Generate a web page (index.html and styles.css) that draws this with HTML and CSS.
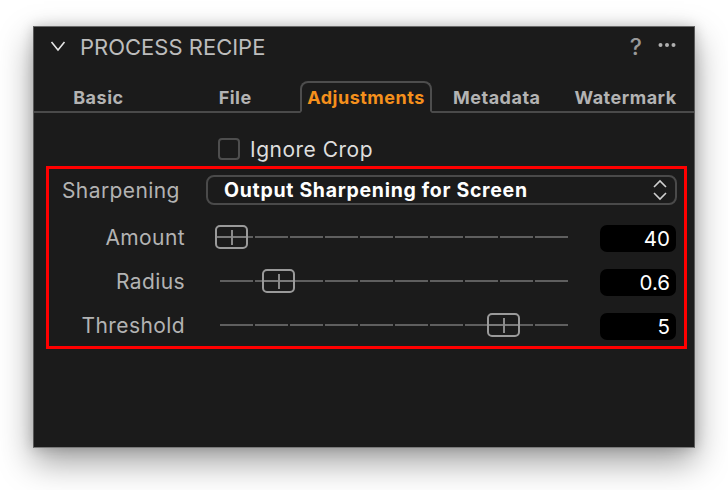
FILE: index.html
```
<!DOCTYPE html>
<html>
<head>
<meta charset="utf-8">
<link rel="stylesheet" href="styles.css">
</head>
<body>
<div class="panel">
  <div class="header">
    <svg class="chev" width="16" height="12" viewBox="0 0 16 12"><path d="M1.5 2 L8 10 L14.5 2" fill="none" stroke="#e6e6e6" stroke-width="1.6"/></svg>
    <span class="title">PROCESS RECIPE</span>
    <span class="help">?</span>
    <svg class="more" width="18" height="6" viewBox="0 0 18 6"><circle cx="2.5" cy="3" r="2" fill="#b0b0b0"/><circle cx="9" cy="3" r="2" fill="#b0b0b0"/><circle cx="15.5" cy="3" r="2" fill="#b0b0b0"/></svg>
  </div>
  <div class="tabs">
    <div class="tab">Basic</div>
    <div class="tab">File</div>
    <div class="tab active">Adjustments</div>
    <div class="tab">Metadata</div>
    <div class="tab">Watermark</div>
  </div>
  <div class="content">
    <div class="ignore"><span class="checkbox"></span><span>Ignore Crop</span></div>
    <div class="highlight">
      <div class="row select-row">
        <span class="label label-left">Sharpening</span>
        <div class="select">
          <span>Output Sharpening for Screen</span>
          <svg class="updown" width="16" height="22" viewBox="0 0 16 22"><path d="M2 8 L8 2 L14 8" fill="none" stroke="#cfcfcf" stroke-width="1.6"/><path d="M2 14 L8 20 L14 14" fill="none" stroke="#cfcfcf" stroke-width="1.6"/></svg>
        </div>
      </div>
      <div class="row slider-row">
        <span class="label">Amount</span>
        <div class="slider">
          <div class="track"><i></i><i></i><i></i><i></i><i></i><i></i><i></i><i></i><i></i><i></i></div>
          <div class="thumb" style="left:1px"></div>
        </div>
        <div class="value">40</div>
      </div>
      <div class="row slider-row">
        <span class="label">Radius</span>
        <div class="slider">
          <div class="track"><i></i><i></i><i></i><i></i><i></i><i></i><i></i><i></i><i></i><i></i></div>
          <div class="thumb" style="left:48px"></div>
        </div>
        <div class="value">0.6</div>
      </div>
      <div class="row slider-row">
        <span class="label">Threshold</span>
        <div class="slider">
          <div class="track"><i></i><i></i><i></i><i></i><i></i><i></i><i></i><i></i><i></i><i></i></div>
          <div class="thumb" style="left:273px"></div>
        </div>
        <div class="value">5</div>
      </div>
    </div>
  </div>
</div>
</body>
</html>
```
FILE: styles.css
```
* { box-sizing: border-box; }
html, body { margin: 0; padding: 0; background: #ffffff; }
body {
  padding: 26px 0 0 33px;
  min-height: 490px;
  font-family: Inter, "Liberation Sans", sans-serif;
}
.panel {
  width: 662px;
  height: 422px;
  background: #1b1b1b;
  border: 1px solid #5a5a5a;
  border-top-color: #6a6a6a;
  border-bottom-color: #7a7a7a;
  box-shadow: 0 14px 32px rgba(0,0,0,0.38), 0 0 12px rgba(0,0,0,0.18);
}
.header {
  height: 39px;
  display: flex;
  align-items: center;
  padding: 0 18px 0 16px;
}
.chev { display: block; margin-top: -1px; }
.title {
  margin-left: 14px;
  font-size: 22px;
  color: #bdbdbd;
  flex: 1;
}
.help {
  font-size: 23px;
  color: #9a9a9a;
  font-weight: 500;
  margin-right: 16px;
}
.more { display: block; margin-top: -4px; }
.tabs {
  margin-top: 15px;
  height: 32px;
  display: flex;
  align-items: stretch;
  border-bottom: 2px solid #4a4a4a;
  padding-right: 4px;
}
.tab {
  flex: 1;
  height: 32px;
  margin-bottom: -2px;
  display: flex;
  align-items: center;
  justify-content: center;
  font-size: 18px;
  letter-spacing: 0.5px;
  font-weight: 700;
  color: #b3b3b3;
  padding-top: 1px;
}
.tab:first-child { padding-right: 8px; }
.tab.active {
  border: 2px solid #4d4d4d;
  border-bottom: 2px solid #1b1b1b;
  border-radius: 8px 8px 0 0;
  color: #f5901c;
}
.ignore {
  margin: 25px 0 0 184px;
  height: 22px;
  display: flex;
  align-items: center;
  font-size: 21px;
  letter-spacing: 0.5px;
  color: #dedede;
}
.checkbox {
  width: 22px;
  height: 22px;
  border: 2px solid #4e4e4e;
  border-radius: 4px;
  margin-right: 10px;
}
.highlight {
  margin: 6px 7px 0 12px;
  border: 3px solid #ff0000;
  padding: 6px 6px 7px 0;
}
.row { display: flex; align-items: center; }
.select-row { height: 30px; }
.slider-row { height: 28px; margin-top: 16px; }
.select-row + .slider-row { margin-top: 18px; }
.label {
  width: 136px;
  text-align: right;
  font-size: 21px;
  letter-spacing: 0.4px;
  color: #b3b3b3;
  flex: none;
}
.label-left { text-align: left; padding-left: 13px; }
.select {
  margin-left: 21px;
  width: 471px;
  height: 30px;
  border: 2px solid #4a4a4a;
  border-radius: 8px;
  display: flex;
  align-items: center;
  justify-content: space-between;
  padding: 0 7px 0 16px;
  font-size: 19.5px;
  letter-spacing: 0.7px;
  font-weight: 700;
  color: #ffffff;
}
.updown { display: block; }
.slider {
  position: relative;
  margin-left: 29px;
  width: 356px;
  height: 28px;
  flex: none;
}
.track {
  position: absolute;
  left: 6px;
  top: 13px;
  width: 348px;
  height: 2px;
  display: flex;
  gap: 2px;
}
.track i { flex: 1; background: #5f5f5f; }
.thumb {
  position: absolute;
  top: 2px;
  width: 33px;
  height: 24px;
  border: 2px solid #9a9a9a;
  border-radius: 5px;
  background: #1b1b1b;
}
.thumb::before {
  content: "";
  position: absolute;
  left: 0; right: 0;
  top: 9px;
  height: 2px;
  background: #7a7a7a;
}
.thumb::after {
  content: "";
  position: absolute;
  left: 14px;
  top: 3px;
  width: 1.5px;
  height: 15px;
  background: #8a8a8a;
}
.value {
  margin-left: 30px;
  width: 76px;
  height: 27px;
  margin-top: 3px;
  background: #000;
  border-radius: 7px;
  color: #ffffff;
  font-size: 20.5px;
  text-align: right;
  padding-right: 6px;
  line-height: 28px;
  flex: none;
}
```
